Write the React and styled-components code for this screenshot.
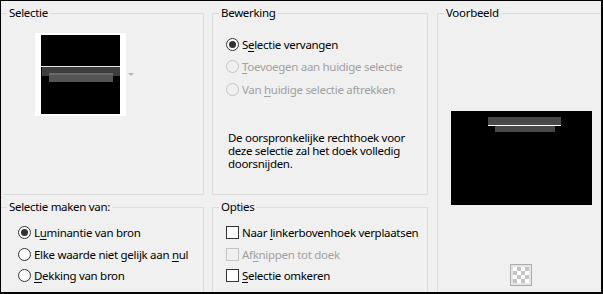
import React from "react";
import styled, { createGlobalStyle } from "styled-components";

const GlobalStyle = createGlobalStyle`
	html, body {
		margin: 0;
		padding: 0;
		background: #f0f0f0;
	}
	body {
		font-family: "Noto Sans", "Open Sans", sans-serif;
		font-size: 11.5px;
		color: #000;
	}
`;

const Thumbnail = () => (
	<svg width="79" height="79" viewBox="0 0 79 79">
		<rect width="79" height="79" fill="#000" />
		<rect x="1" y="32" width="78" height="9" fill="#3d3d3d" />
		<rect x="8" y="38" width="64" height="9" fill="#555" />
		<rect x="8" y="38" width="64" height="2" fill="#6a6a6a" />
		<rect x="0" y="31" width="79" height="1" fill="#e8e8e8" />
	</svg>
);

const PreviewImage = () => (
	<svg width="141" height="94" viewBox="0 0 141 94">
		<rect width="141" height="94" fill="#000" />
		<rect x="37" y="6" width="73" height="8" fill="#484848" />
		<rect x="44" y="12" width="60" height="9" fill="#484848" />
		<rect x="37" y="14" width="73" height="1" fill="#fff" />
	</svg>
);

// at = position of the underlined access key in the label
const KeyLabel = ({ label, at }) => (
	<span>
		{label.slice(0, at)}
		<u>{label[at]}</u>
		{label.slice(at + 1)}
	</span>
);

const Radio = ({ label, at, checked, disabled, height }) => (
	<Row $height={height} $disabled={disabled}>
		<RadioDot $checked={checked} $disabled={disabled} />
		<KeyLabel label={label} at={at} />
	</Row>
);

const Check = ({ label, at, disabled, height }) => (
	<Row $height={height} $disabled={disabled}>
		<CheckBox $disabled={disabled} />
		<KeyLabel label={label} at={at} />
	</Row>
);

const App = () => {
	return (
		<>
			<GlobalStyle />
			<Frame>
				<Layout>
					<Column>
						<Group $height={189}>
							<Legend>Selectie</Legend>
							<SelectieBody>
								<Thumb>
									<Thumbnail />
								</Thumb>
								<Arrow />
							</SelectieBody>
						</Group>
						<Group $height={100}>
							<Legend>Selectie maken van:</Legend>
							<OptionList $left={17} $top={8}>
								<Radio label="Luminantie van bron" at={1} checked height={21.5} />
								<Radio label="Elke waarde niet gelijk aan nul" at={28} height={21.5} />
								<Radio label="Dekking van bron" at={0} height={21.5} />
							</OptionList>
						</Group>
					</Column>
					<Column $width={216}>
						<Group $height={189}>
							<Legend>Bewerking</Legend>
							<OptionList $left={13} $top={13}>
								<Radio label="Selectie vervangen" at={1} checked height={22.5} />
								<Radio label="Toevoegen aan huidige selectie" at={0} disabled height={22.5} />
								<Radio label="Van huidige selectie aftrekken" at={4} disabled height={22.5} />
								<Description>
									De oorspronkelijke rechthoek voor deze selectie zal het doek volledig
									doorsnijden.
								</Description>
							</OptionList>
						</Group>
						<Group $height={100}>
							<Legend>Opties</Legend>
							<OptionList $left={13} $top={8}>
								<Check label="Naar linkerbovenhoek verplaatsen" at={5} height={21.5} />
								<Check label="Afknippen tot doek" at={2} disabled height={21.5} />
								<Check label="Selectie omkeren" at={0} height={21.5} />
							</OptionList>
						</Group>
					</Column>
					<PreviewGroup>
						<Legend>Voorbeeld</Legend>
						<PreviewBody>
							<PreviewImage />
							<TransparencyButton>
								<Checker />
							</TransparencyButton>
						</PreviewBody>
					</PreviewGroup>
				</Layout>
			</Frame>
		</>
	);
};

export default App;

const Frame = styled.div`
	width: 603px;
	height: 294px;
	box-sizing: border-box;
	border-style: solid;
	border-color: #000;
	border-width: 1px 2px 2px 1px;
	background: #f0f0f0;
	overflow: hidden;
`;

const Layout = styled.div`
	display: flex;
	gap: 8px;
	margin-left: -1px;
	padding-top: 5px;
`;

const Column = styled.div`
	display: flex;
	flex-direction: column;
	gap: 5px;
	width: ${(p) => p.$width || 204}px;
	flex-shrink: 0;
`;

const Group = styled.fieldset`
	margin: 0;
	padding: 0;
	min-width: 0;
	box-sizing: border-box;
	height: ${(p) => p.$height}px;
	border: 1px solid #dcdcdc;
	flex-shrink: 0;
`;

const PreviewGroup = styled(Group)`
	width: 168px;
	height: 300px;
	margin-left: 1px;
`;

const Legend = styled.legend`
	margin-left: 6px;
	padding: 0 2px;
	line-height: 14px;
	letter-spacing: -0.3px;
	color: #000;
`;

const SelectieBody = styled.div`
	display: flex;
	align-items: center;
	padding: 13px 0 0 34px;
`;

const Thumb = styled.div`
	display: flex;
	padding: 2px 6px;
	background: #fff;

	svg {
		display: block;
	}
`;

const Arrow = styled.div`
	margin-left: 2px;
	width: 0;
	height: 0;
	border-left: 3px solid transparent;
	border-right: 3px solid transparent;
	border-top: 3px solid #b4b4b4;
`;

const OptionList = styled.div`
	display: flex;
	flex-direction: column;
	padding: ${(p) => p.$top}px 0 0 ${(p) => p.$left}px;
`;

const Row = styled.label`
	display: flex;
	align-items: center;
	gap: 3px;
	height: ${(p) => p.$height}px;
	letter-spacing: -0.3px;
	white-space: nowrap;
	color: ${(p) => (p.$disabled ? "#a0a0a0" : "#000")};

	u {
		text-underline-offset: 2px;
	}
`;

const RadioDot = styled.span`
	position: relative;
	box-sizing: border-box;
	width: 13px;
	height: 13px;
	border-radius: 50%;
	flex-shrink: 0;
	border: 1px solid ${(p) => (p.$disabled ? "#c4c4c4" : "#333")};
	background: ${(p) => (p.$disabled ? "#f0f0f0" : "#fff")};

	&::after {
		content: "";
		display: ${(p) => (p.$checked ? "block" : "none")};
		position: absolute;
		left: 2px;
		top: 2px;
		width: 7px;
		height: 7px;
		border-radius: 50%;
		background: #333;
	}
`;

const CheckBox = styled.span`
	box-sizing: border-box;
	width: 13px;
	height: 13px;
	flex-shrink: 0;
	border: 1px solid ${(p) => (p.$disabled ? "#c4c4c4" : "#333")};
	background: ${(p) => (p.$disabled ? "#f0f0f0" : "#fff")};
`;

const Description = styled.p`
	margin: 30px 0 0 2px;
	width: 186px;
	line-height: 13px;
	letter-spacing: -0.3px;
`;

const PreviewBody = styled.div`
	display: flex;
	flex-direction: column;
	align-items: center;
	padding-top: 91px;

	svg {
		display: block;
	}
`;

const TransparencyButton = styled.div`
	margin-top: 59px;
	box-sizing: border-box;
	width: 22px;
	height: 22px;
	padding: 2px;
	border: 1px solid #adadad;
	background: #e5e5e5;
`;

const Checker = styled.div`
	width: 16px;
	height: 16px;
	background: repeating-conic-gradient(#c4c4c4 0% 25%, #fff 0% 50%) 0 0 / 8px 8px;
`;
